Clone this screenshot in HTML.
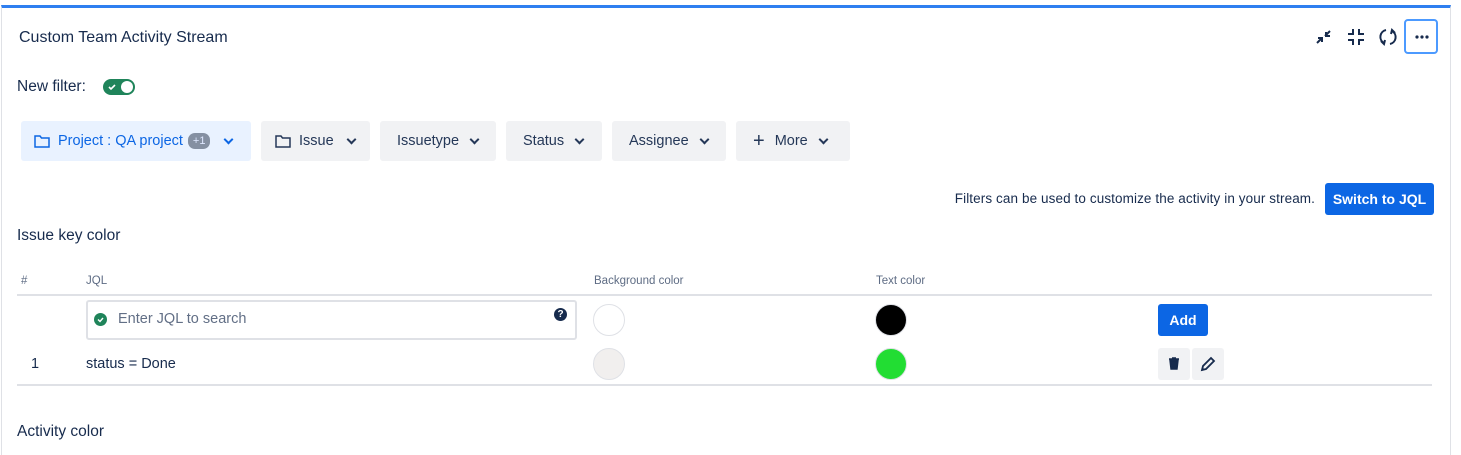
<!DOCTYPE html><html><head><style>
body{margin:0;width:1461px;height:443px;overflow:hidden;background:#fff;font-family:"Liberation Sans",sans-serif;color:#172b4d;position:relative}
.a{position:absolute}
.card{left:1px;top:5px;width:1450px;height:450px;border-left:1px solid #dfe1e6;border-right:1px solid #dfe1e6;border-top:3px solid #2f7ff0;box-sizing:border-box}
.btn{position:absolute;top:121px;height:40px;background:#f1f2f4;border-radius:3px;font-size:14.5px;display:flex;align-items:center;box-sizing:border-box;padding-left:17px;color:#253858}
.chev{display:inline-block;width:5px;height:5px;border-right:2px solid currentColor;border-bottom:2px solid currentColor;transform:rotate(45deg);margin:-4px 0 0 0}
.th{font-size:11.5px;color:#5e6c84;top:275px}
.circ{width:32px;height:32px;border-radius:50%;border:1.5px solid #dfe1e6;box-sizing:border-box}
</style></head><body>
<div class="a card"></div>
<div class="a" style="left:19px;top:29px;font-size:16px">Custom Team Activity Stream</div>
<svg class="a" style="left:1314px;top:27px" width="20" height="20" viewBox="0 0 20 20" fill="none" stroke="#172b4d" stroke-width="2"><path d="M3 16l5-5M4 11h4v4M16 4l-5 5M12 5v4h4" /></svg>
<svg class="a" style="left:1346px;top:27px" width="20" height="20" viewBox="0 0 20 20" fill="none" stroke="#172b4d" stroke-width="2"><path d="M2 7h5V2M13 2v5h5M18 13h-5v5M7 18v-5H2"/></svg>
<svg class="a" style="left:1378px;top:27px" width="20" height="20" viewBox="0 0 20 20" fill="none" stroke="#172b4d" stroke-width="2"><path d="M8 3A7 7 0 0 0 6 16M12 17A7 7 0 0 0 14 4"/><path d="M3 14l3 3 1-4M17 6l-3-3-1 4"/></svg>
<div class="a" style="left:1404px;top:19px;width:34px;height:35px;border:2px solid #4c9aff;border-radius:4px;box-sizing:border-box"><svg class="a" style="left:9px;top:14px" width="14" height="4"><circle cx="2" cy="2" r="1.6" fill="#172b4d"/><circle cx="7" cy="2" r="1.6" fill="#172b4d"/><circle cx="12" cy="2" r="1.6" fill="#172b4d"/></svg></div>
<div class="a" style="left:17px;top:78px;font-size:15.5px">New filter:</div>
<div class="a" style="left:103px;top:79px;width:32px;height:16px;border-radius:8px;background:#1f845a"><div class="a" style="left:18px;top:2px;width:12px;height:12px;border-radius:50%;background:#fff"></div><svg class="a" style="left:4px;top:3px" width="10" height="10" viewBox="0 0 10 10"><path d="M2 5l2 2 4-4" stroke="#fff" stroke-width="1.6" fill="none"/></svg></div>
<div class="btn" style="left:21px;width:230px;background:#e9f2ff;color:#0c66e4;padding-left:13px"><svg width="16" height="14" viewBox="0 0 16 14" fill="none" stroke="#0c66e4" stroke-width="1.5"><path d="M1 2h5l1.5 2H15v9H1z"/></svg><span style="margin-left:8px">Project : QA project</span><span style="margin-left:5px;background:#8590a2;color:#dfe8ff;border-radius:7px;font-size:11px;padding:2px 5px">+1</span><span class="chev" style="margin-left:15px"></span></div>
<div class="btn" style="left:261px;width:109px;padding-left:14px"><svg width="16" height="14" viewBox="0 0 16 14" fill="none" stroke="#253858" stroke-width="1.5"><path d="M1 2h5l1.5 2H15v9H1z"/></svg><span style="margin-left:8px">Issue</span><span class="chev" style="margin-left:14px"></span></div>
<div class="btn" style="left:380px;width:116px">Issuetype<span class="chev" style="margin-left:12px"></span></div>
<div class="btn" style="left:506px;width:96px">Status<span class="chev" style="margin-left:12px"></span></div>
<div class="btn" style="left:612px;width:114px">Assignee<span class="chev" style="margin-left:12px"></span></div>
<div class="btn" style="left:736px;width:114px"><span style="font-size:20px;margin-right:10px">+</span>More<span class="chev" style="margin-left:12px"></span></div>
<div class="a" style="right:146px;top:191px;font-size:13.5px;letter-spacing:0.1px">Filters can be used to customize the activity in your stream.</div>
<div class="a" style="left:1325px;top:183px;width:109px;height:32px;background:#0c66e4;border-radius:3px;color:#fff;font-size:14px;font-weight:bold;text-align:center;line-height:32px">Switch to JQL</div>
<div class="a" style="left:17px;top:227px;font-size:15.5px">Issue key color</div>
<div class="a th" style="left:21px">#</div>
<div class="a th" style="left:86px">JQL</div>
<div class="a th" style="left:594px">Background color</div>
<div class="a th" style="left:876px">Text color</div>
<div class="a" style="left:17px;top:294px;width:1415px;height:2px;background:#dfe1e6"></div>
<div class="a" style="left:86px;top:300px;width:491px;height:40px;border:2px solid #dfe1e6;border-radius:3px;box-sizing:border-box"></div>
<svg class="a" style="left:94px;top:313px" width="13" height="13" viewBox="0 0 13 13"><circle cx="6.5" cy="6.5" r="6.5" fill="#1f845a"/><path d="M4 6.5l2 2 3-3.5" stroke="#fff" stroke-width="1.4" fill="none"/></svg>
<div class="a" style="left:118px;top:311px;font-size:14.5px;color:#626f86">Enter JQL to search</div>
<div class="a" style="left:554px;top:308px;width:13px;height:13px;border-radius:50%;background:#172b4d;color:#fff;font-size:10px;font-weight:bold;text-align:center;line-height:13px">?</div>
<div class="a circ" style="left:593px;top:304px;background:#fff"></div>
<div class="a circ" style="left:875px;top:304px;background:#000"></div>
<div class="a" style="left:1158px;top:304px;width:50px;height:32px;background:#0c66e4;border-radius:3px;color:#fff;font-size:14px;font-weight:bold;text-align:center;line-height:32px">Add</div>
<div class="a" style="left:31px;top:356px;font-size:14.5px">1</div>
<div class="a" style="left:86px;top:356px;font-size:14.5px">status = Done</div>
<div class="a circ" style="left:593px;top:348px;background:#f1efee"></div>
<div class="a circ" style="left:875px;top:348px;background:#22dd33"></div>
<div class="a" style="left:1158px;top:348px;width:32px;height:32px;background:#f1f2f4;border-radius:3px"><svg class="a" style="left:10px;top:9px" width="12" height="13" viewBox="0 0 12 13"><path d="M1 2h10M4 1h4M2 3.5h8L9 12H3z" stroke="#172b4d" fill="#172b4d" stroke-width="1.4"/></svg></div>
<div class="a" style="left:1192px;top:348px;width:32px;height:32px;background:#f1f2f4;border-radius:3px"><svg class="a" style="left:7px;top:7px" width="18" height="18" viewBox="0 0 18 18" fill="none" stroke="#172b4d" stroke-width="1.8"><path d="M3 15l1-4 8-8 3 3-8 8z"/><path d="M3 15l2-1"/></svg></div>
<div class="a" style="left:17px;top:384px;width:1415px;height:2px;background:#dfe1e6"></div>
<div class="a" style="left:17px;top:423px;font-size:15.5px">Activity color</div>
</body></html>
